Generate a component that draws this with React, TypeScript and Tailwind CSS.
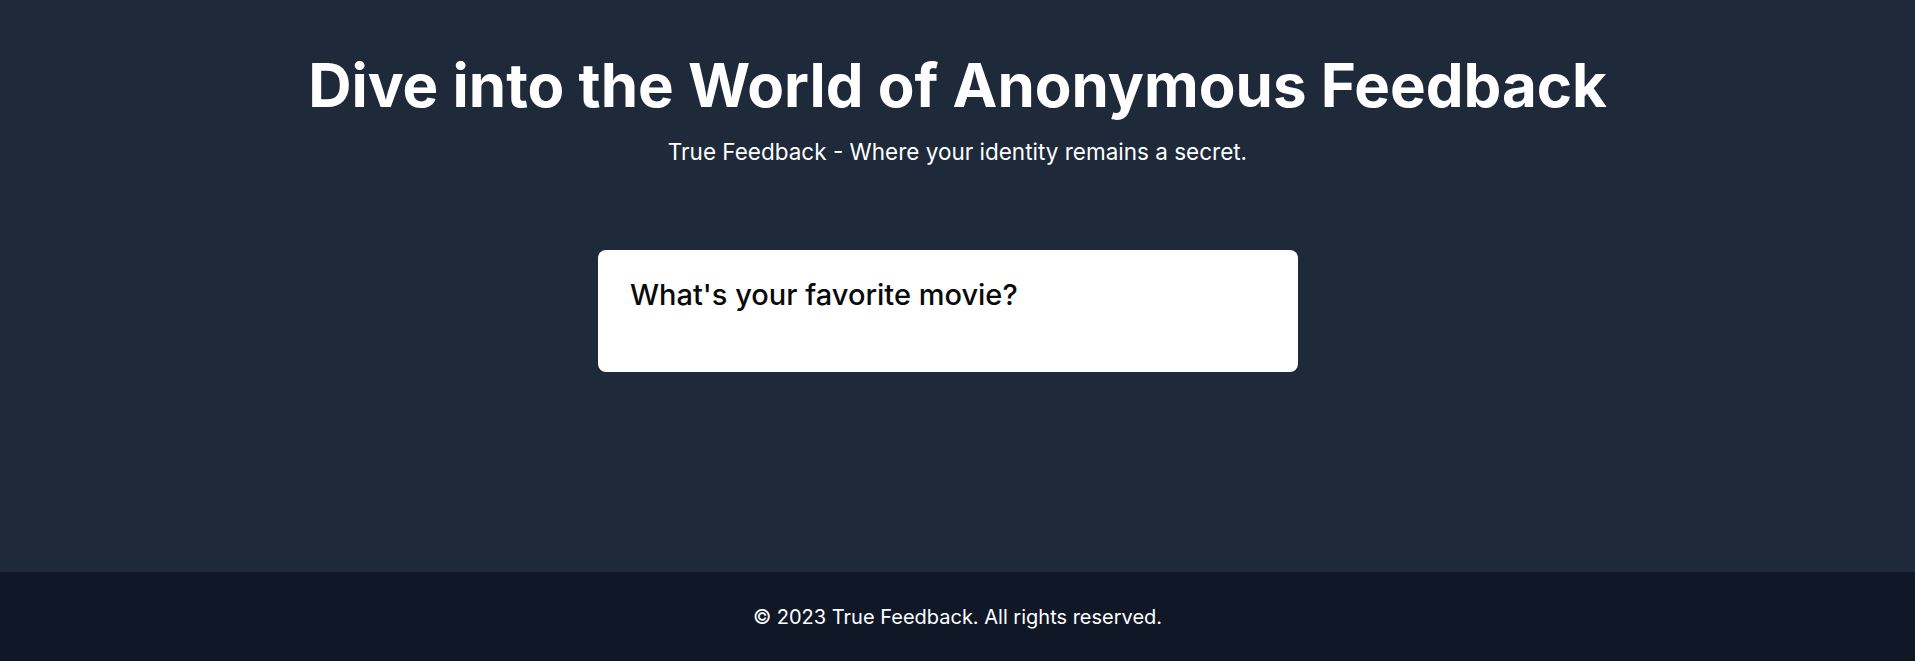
import React from "react"

const messages = [
  { title: "What's your favorite movie?" },
]

function App() {
  return (
    <div className="min-h-[661px] flex flex-col bg-gray-800 text-white font-['Inter',sans-serif]">
      <main className="flex-grow flex flex-col items-center px-24 pt-[49px]">
        <section className="text-center">
          <h1 className="text-[60px] leading-[72px] font-bold">
            Dive into the World of Anonymous Feedback
          </h1>
          <p className="mt-[16px] text-[22.5px] leading-[30px]">
            True Feedback - Where your identity remains a secret.
          </p>
        </section>

        <div className="mt-[83px] flex justify-center w-full">
          {messages.map((m, i) => (
            <div
              key={i}
              className="w-[700px] mr-[19px] h-[122px] rounded-lg bg-white text-[#0a0a0a] px-[32px] pt-[26px]"
            >
              <h3 className="text-[29px] leading-[38px] font-medium">{m.title}</h3>
            </div>
          ))}
        </div>
      </main>

      <footer className="bg-gray-900 h-[89px] flex items-center justify-center text-[20px]">
        © 2023 True Feedback. All rights reserved.
      </footer>
    </div>
  )
}

export default App
